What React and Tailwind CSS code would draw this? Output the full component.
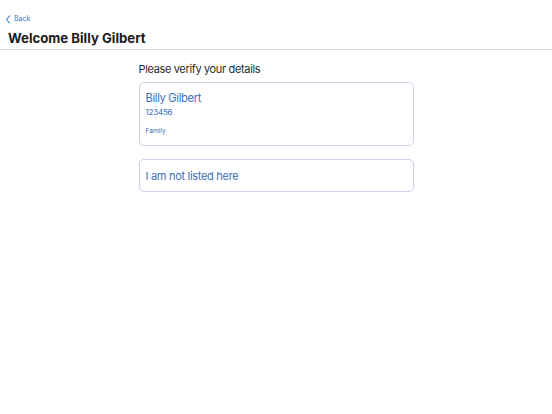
export default function App() {
  return (
    <div className="w-[552px] h-[414px] bg-white" style={{ fontFamily: 'Inter, "Noto Sans", sans-serif' }}>
      <div className="border-b border-[#d9d9d9]">
        <div className="pt-[14px] pl-[5px] flex items-center gap-[3px] text-[#3c74c4] text-[7px] leading-[10px]">
          <svg width="6" height="9" viewBox="0 0 6 9" fill="none">
            <path d="M4.5 1 L1.5 4.5 L4.5 8" stroke="#3c74c4" strokeWidth="1.1" strokeLinecap="round" strokeLinejoin="round" />
          </svg>
          <span>Back</span>
        </div>
        <div className="pl-[8px] pt-[4px] pb-[1px] text-[13.2px] leading-[20px] font-bold text-[#1b1b1b]">
          Welcome Billy Gilbert
        </div>
      </div>
      <div className="w-[275px] mx-auto pt-[12px]">
        <div className="text-[11px] leading-[14px] tracking-[-0.35px] text-[#2a2a2a]">Please verify your details</div>
        <div className="mt-[6px] h-[64px] border border-[#c7d2e6] rounded-[5px] px-[6px] pt-[8px]">
          <div className="text-[11.2px] leading-[14px] tracking-[-0.35px] text-[#3c6fb8]">Billy Gilbert</div>
          <div className="text-[8px] leading-[10px] tracking-[-0.2px] text-[#3c6fb8] mt-[2px]">123456</div>
          <div className="text-[6.6px] leading-[9px] text-[#3c6fb8] mt-[9.5px]">Family</div>
        </div>
        <div className="mt-[13px] h-[33px] border border-[#c7d2e6] rounded-[5px] px-[6px] flex items-center">
          <div className="text-[11px] leading-[14px] tracking-[-0.3px] text-[#3c6fb8]">I am not listed here</div>
        </div>
      </div>
    </div>
  );
}
